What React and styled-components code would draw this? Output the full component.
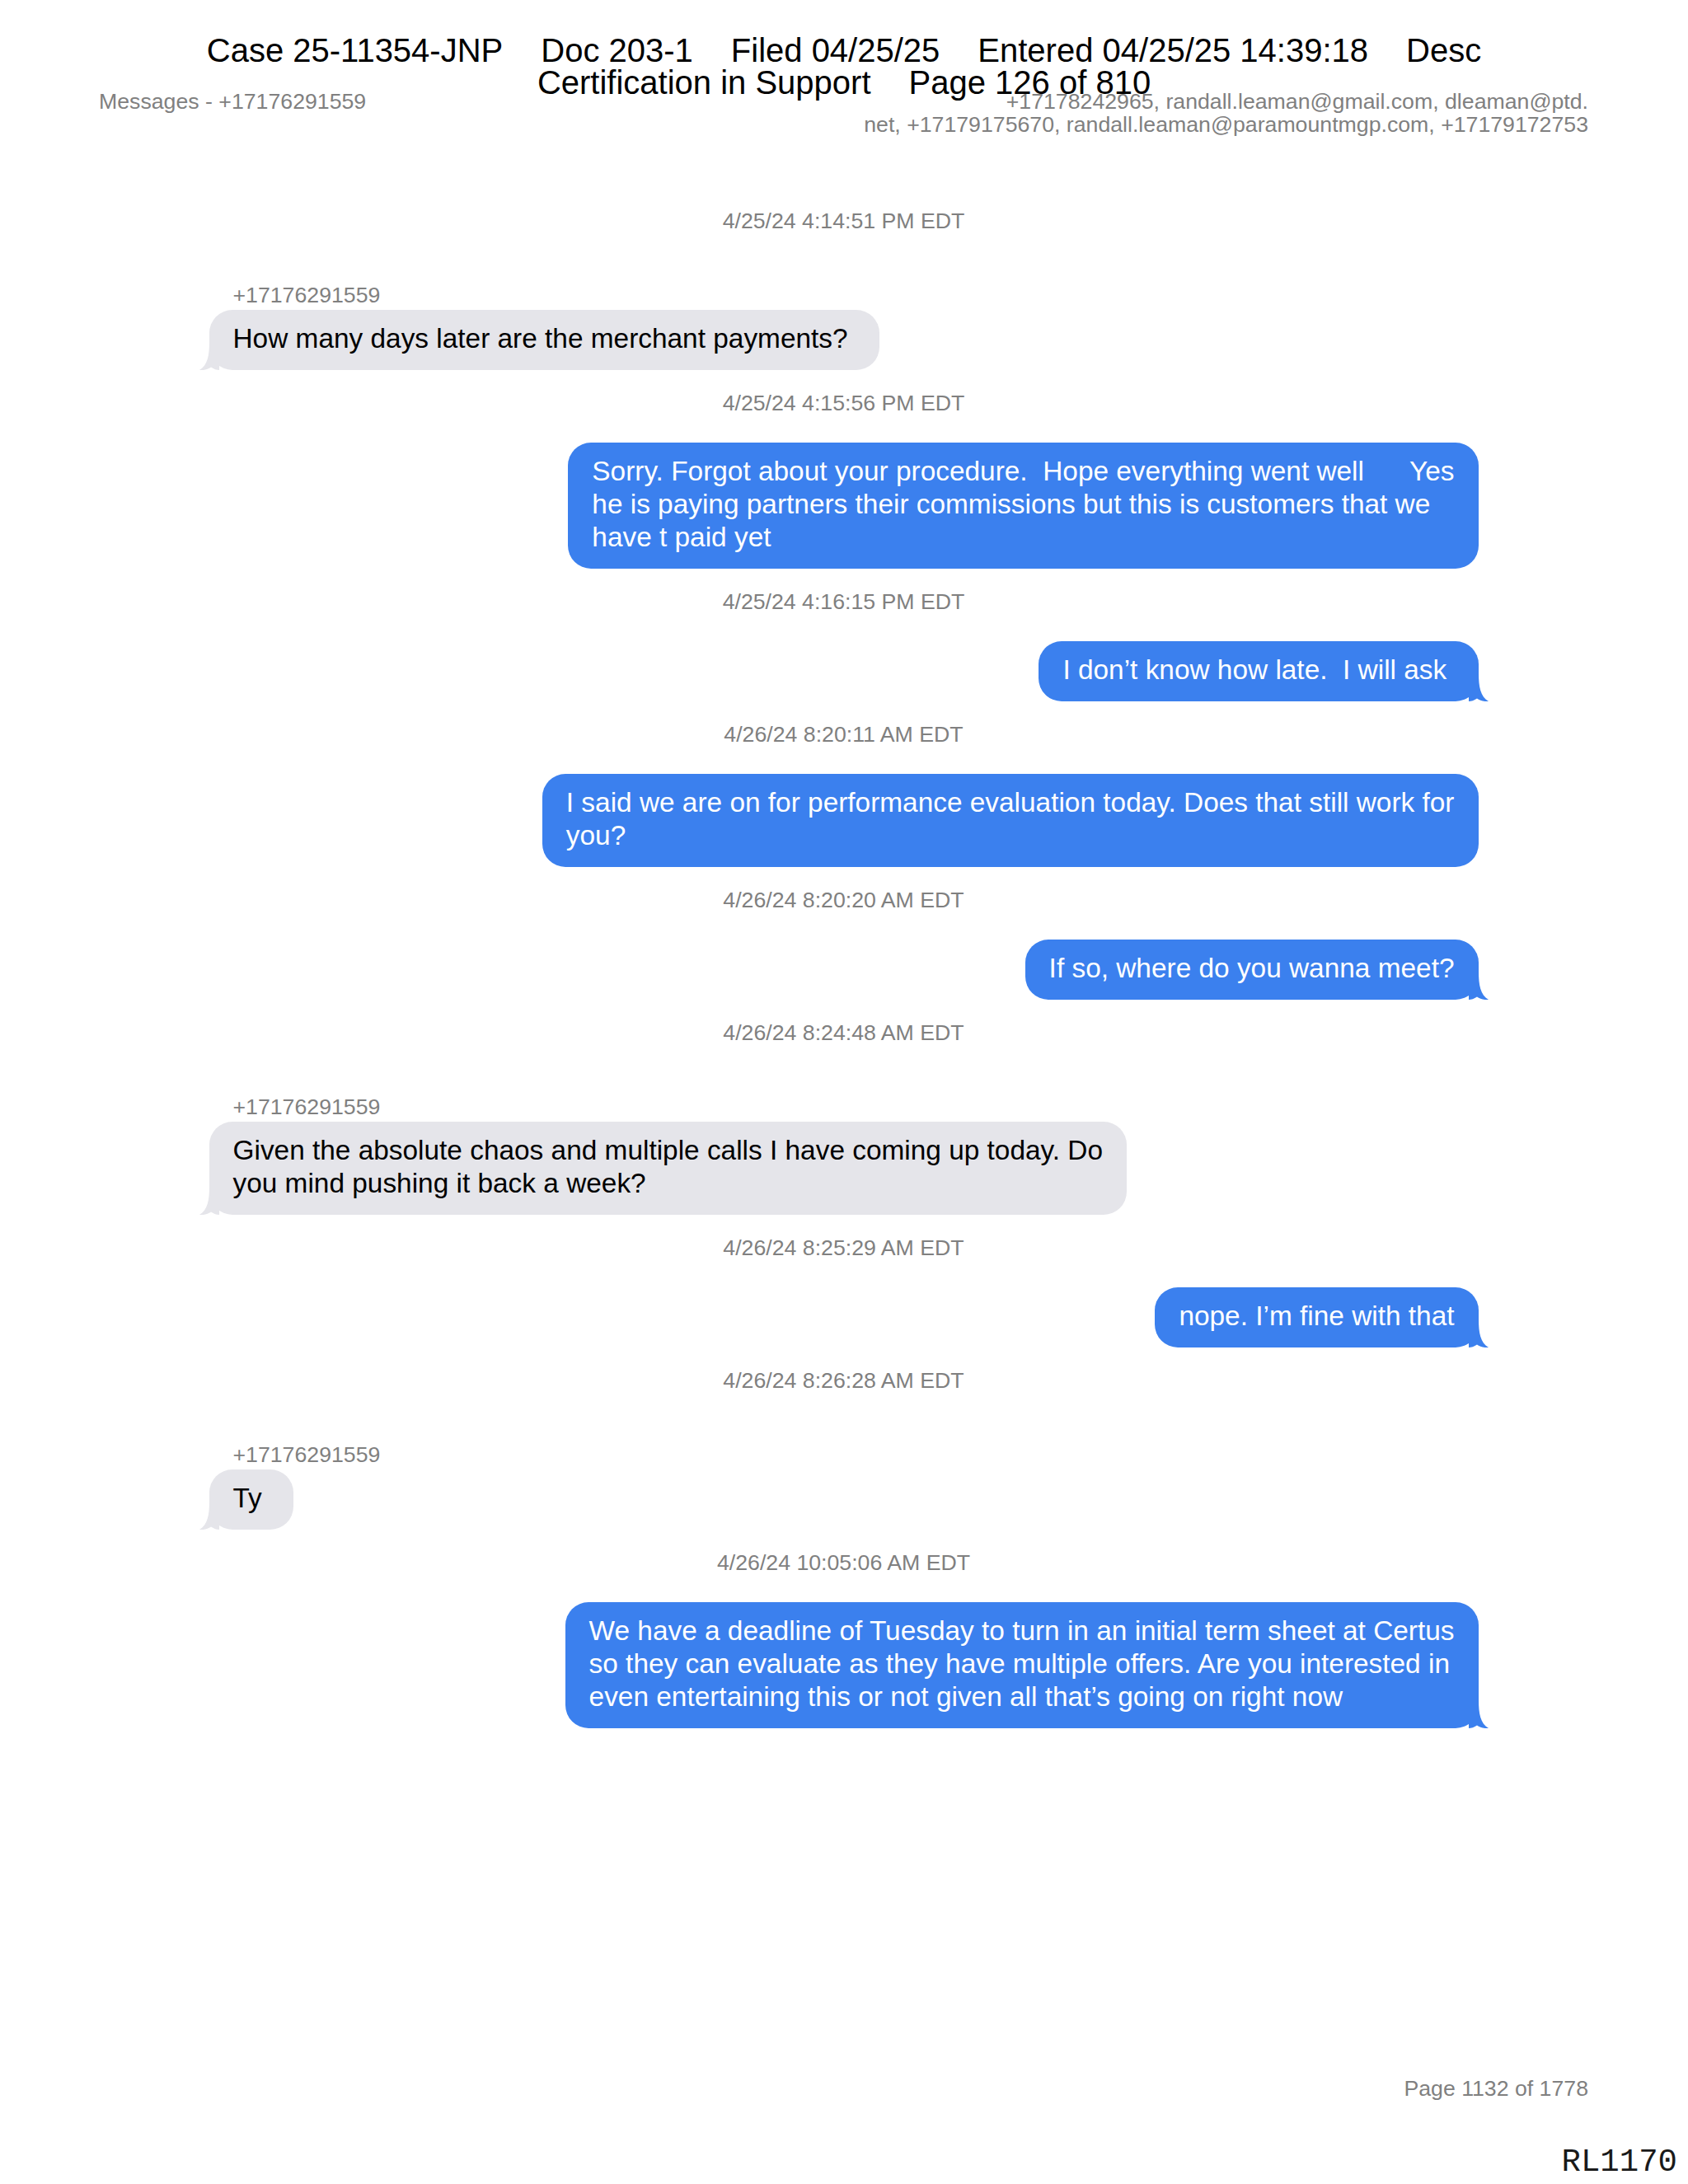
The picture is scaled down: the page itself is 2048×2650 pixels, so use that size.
import React from 'react';
import styled, { createGlobalStyle } from 'styled-components';

const GlobalStyle = createGlobalStyle`
  html,
  body {
    margin: 0;
    padding: 0;
    background: #fff;
  }
  body {
    font-family: 'Liberation Sans', Arial, sans-serif;
  }
`;

const Page = styled.div`
  position: relative;
  width: 2048px;
  height: 2650px;
  box-sizing: border-box;
  padding: 109px 121px 101px 120px;
  display: flex;
  flex-direction: column;
  background: #fff;
`;

const CourtStamp = styled.div`
  position: absolute;
  top: 42px;
  left: 0;
  right: 0;
  font-size: 40px;
  line-height: 39px;
  color: #000;
`;

const StampLine = styled.div`
  display: flex;
  justify-content: center;
  gap: 46px;
  white-space: nowrap;
`;

const TopBar = styled.header`
  display: flex;
  justify-content: space-between;
  align-items: flex-start;
  font-size: 26.7px;
  line-height: 28px;
  color: #808080;
`;

const Recipients = styled.div`
  text-align: right;
`;

const Thread = styled.main`
  width: 1540px;
  align-self: center;
  padding-top: 63px;
  display: flex;
  flex-direction: column;
`;

const Timestamp = styled.div`
  text-align: center;
  font-size: 26.7px;
  line-height: 30px;
  color: #808080;
  margin: 25px 0 33px;
`;

const Sender = styled.div`
  padding-left: 29px;
  font-size: 26.7px;
  line-height: 30px;
  color: #808080;
  margin: 27px 0 3px;
`;

const Bubble = styled.div`
  position: relative;
  align-self: ${(p) => (p.$out ? 'flex-end' : 'flex-start')};
  background: ${(p) => (p.$out ? '#3b80ee' : '#e5e5ea')};
  color: ${(p) => (p.$out ? '#fff' : '#000')};
  font-size: 33.4px;
  line-height: 40px;
  padding: 15px 29px 18px;
  border-radius: 28px;
  white-space: pre;
`;

const Tail = styled.svg`
  position: absolute;
  bottom: 0;
  width: 24px;
  height: 34px;
  ${(p) => (p.$out ? 'right: -12px;' : 'left: -12px; transform: scaleX(-1);')}
`;

const Footer = styled.div`
  margin-top: auto;
  text-align: right;
  font-size: 26.7px;
  line-height: 30px;
  color: #808080;
`;

const Bates = styled.div`
  position: absolute;
  right: 13px;
  bottom: 6px;
  font-family: 'Liberation Mono', 'Courier New', monospace;
  font-size: 39px;
  line-height: 39px;
  color: #1a1a1a;
`;

// some messages keep the trailing space of the export
const messages = [
  {
    time: '4/25/24 4:14:51 PM EDT',
    from: '+17176291559',
    tail: true,
    lines: ['How many days later are the merchant payments? '],
  },
  {
    time: '4/25/24 4:15:56 PM EDT',
    out: true,
    lines: [
      'Sorry. Forgot about your procedure.  Hope everything went well      Yes',
      'he is paying partners their commissions but this is customers that we',
      'have t paid yet',
    ],
  },
  {
    time: '4/25/24 4:16:15 PM EDT',
    out: true,
    tail: true,
    lines: ['I don\u2019t know how late.  I will ask '],
  },
  {
    time: '4/26/24 8:20:11 AM EDT',
    out: true,
    lines: ['I said we are on for performance evaluation today. Does that still work for', 'you?'],
  },
  {
    time: '4/26/24 8:20:20 AM EDT',
    out: true,
    tail: true,
    lines: ['If so, where do you wanna meet?'],
  },
  {
    time: '4/26/24 8:24:48 AM EDT',
    from: '+17176291559',
    tail: true,
    lines: ['Given the absolute chaos and multiple calls I have coming up today. Do', 'you mind pushing it back a week?'],
  },
  {
    time: '4/26/24 8:25:29 AM EDT',
    out: true,
    tail: true,
    lines: ['nope. I\u2019m fine with that'],
  },
  {
    time: '4/26/24 8:26:28 AM EDT',
    from: '+17176291559',
    tail: true,
    lines: ['Ty '],
  },
  {
    time: '4/26/24 10:05:06 AM EDT',
    out: true,
    tail: true,
    lines: [
      'We have a deadline of Tuesday to turn in an initial term sheet at Certus',
      'so they can evaluate as they have multiple offers. Are you interested in',
      'even entertaining this or not given all that\u2019s going on right now',
    ],
  },
];

const BubbleTail = ({ out }) => (
  <Tail $out={out} viewBox="0 0 24 34" aria-hidden="true">
    <path
      d="M0 0 L12 0 C12 16 14 28 24 34 C18 34.5 13.5 33 10 30.5 C6.5 33 3 34 0 34 Z"
      fill={out ? '#3b80ee' : '#e5e5ea'}
    />
  </Tail>
);

const Message = ({ msg }) => (
  <>
    <Timestamp>{msg.time}</Timestamp>
    {msg.from && <Sender>{msg.from}</Sender>}
    <Bubble $out={msg.out}>
      {msg.lines.map((line, i) => (
        <React.Fragment key={i}>
          {i > 0 && <br />}
          {line}
        </React.Fragment>
      ))}
      {msg.tail && <BubbleTail out={msg.out} />}
    </Bubble>
  </>
);

const App = () => (
  <>
    <GlobalStyle />
    <Page>
      <TopBar>
        <div>Messages - +17176291559</div>
        <Recipients>
          +17178242965, randall.leaman@gmail.com, dleaman@ptd.
          <br />
          net, +17179175670, randall.leaman@paramountmgp.com, +17179172753
        </Recipients>
      </TopBar>

      <Thread>
        {messages.map((msg, i) => (
          <Message key={i} msg={msg} />
        ))}
      </Thread>

      <Footer>Page 1132 of 1778</Footer>

      <CourtStamp>
        <StampLine>
          <span>Case 25-11354-JNP</span>
          <span>Doc 203-1</span>
          <span>Filed 04/25/25</span>
          <span>Entered 04/25/25 14:39:18</span>
          <span>Desc</span>
        </StampLine>
        <StampLine>
          <span>Certification in Support</span>
          <span>Page 126 of 810</span>
        </StampLine>
      </CourtStamp>

      <Bates>RL1170</Bates>
    </Page>
  </>
);

export default App;
